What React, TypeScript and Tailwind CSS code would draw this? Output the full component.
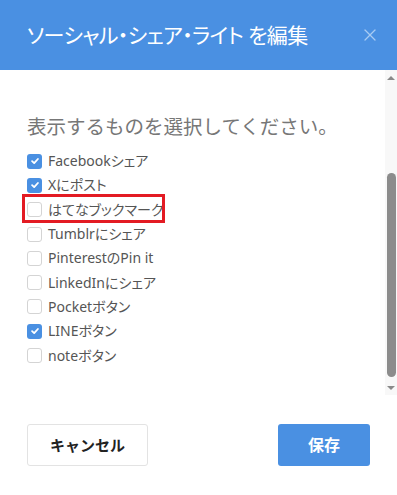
import { X } from 'lucide-react';

const options = [
  { label: 'Facebookシェア', checked: true },
  { label: 'Xにポスト', checked: true },
  { label: 'はてなブックマーク', checked: false, marked: true },
  { label: 'Tumblrにシェア', checked: false },
  { label: 'PinterestのPin it', checked: false },
  { label: 'LinkedInにシェア', checked: false },
  { label: 'Pocketボタン', checked: false },
  { label: 'LINEボタン', checked: true },
  { label: 'noteボタン', checked: false },
];

function Checkbox({ checked }: { checked: boolean }) {
  if (checked) {
    return (
      <span className="flex h-[15px] w-[15px] shrink-0 items-center justify-center rounded-[3px] bg-[#4a90e2]">
        <svg viewBox="0 0 12 12" className="h-[10px] w-[10px]" fill="none" stroke="white" strokeWidth="2.2" strokeLinecap="round" strokeLinejoin="round">
          <path d="M2.5 6.2 5 8.5 9.5 3.6" />
        </svg>
      </span>
    );
  }
  return <span className="h-[15px] w-[15px] shrink-0 rounded-[3px] border border-[#d4d4d4] bg-white" />;
}

function Scrollbar() {
  return (
    <div className="flex w-[12px] shrink-0 flex-col items-center bg-[#f8f8f8]">
      <div className="flex h-[15px] items-center justify-center">
        <span className="h-0 w-0 border-x-[4px] border-b-[4px] border-x-transparent border-b-[#8a8a8a]" />
      </div>
      <div className="h-[88px]" />
      <div className="h-[204px] w-[9px] rounded-full bg-[#8c8c8c]" />
      <div className="flex-1" />
      <div className="flex h-[15px] items-center justify-center">
        <span className="h-0 w-0 border-x-[4px] border-t-[4px] border-x-transparent border-t-[#8a8a8a]" />
      </div>
    </div>
  );
}

export default function App() {
  return (
    <div className="flex h-[495px] w-[397px] flex-col overflow-hidden bg-white font-['Noto_Sans','Noto_Sans_CJK_JP',sans-serif]">
      <header className="flex h-[70px] shrink-0 items-center justify-between bg-[#4a90e2] pl-[27px] pr-[17px]">
        <h1 className="text-[21px] leading-none tracking-[-0.6px] text-white [font-feature-settings:'palt']">ソーシャル・シェア・ライト を編集</h1>
        <X className="h-[20px] w-[20px] text-[#a9cbf3]" strokeWidth={1.5} />
      </header>

      <div className="flex h-[325px] shrink-0">
        <div className="flex-1 pl-[27px] pt-[43px]">
          <p className="text-[19.5px] leading-[28px] text-[#777]">表示するものを選択してください。</p>
          <ul className="mt-[8px]">
            {options.map((option) => (
              <li key={option.label} className="relative flex h-[24.3px] items-center gap-[6px]">
                <Checkbox checked={option.checked} />
                <span className="text-[14px] leading-none text-[#555] [font-feature-settings:'palt']">{option.label}</span>
                {option.marked ? (
                  <span className="absolute left-[-5px] top-[-4px] h-[29px] w-[143px] border-[3px] border-[#e31b23]" />
                ) : null}
              </li>
            ))}
          </ul>
        </div>
        <Scrollbar />
      </div>

      <footer className="flex flex-1 items-start justify-between px-[27px] pt-[29px]">
        <button className="h-[42px] w-[121px] rounded-[3px] border border-[#e3e3e3] bg-white text-[15px] font-bold text-[#222]">
          キャンセル
        </button>
        <button className="h-[42px] w-[92px] rounded-[3px] bg-[#4a90e2] text-[16px] font-bold text-white">
          保存
        </button>
      </footer>
    </div>
  );
}
